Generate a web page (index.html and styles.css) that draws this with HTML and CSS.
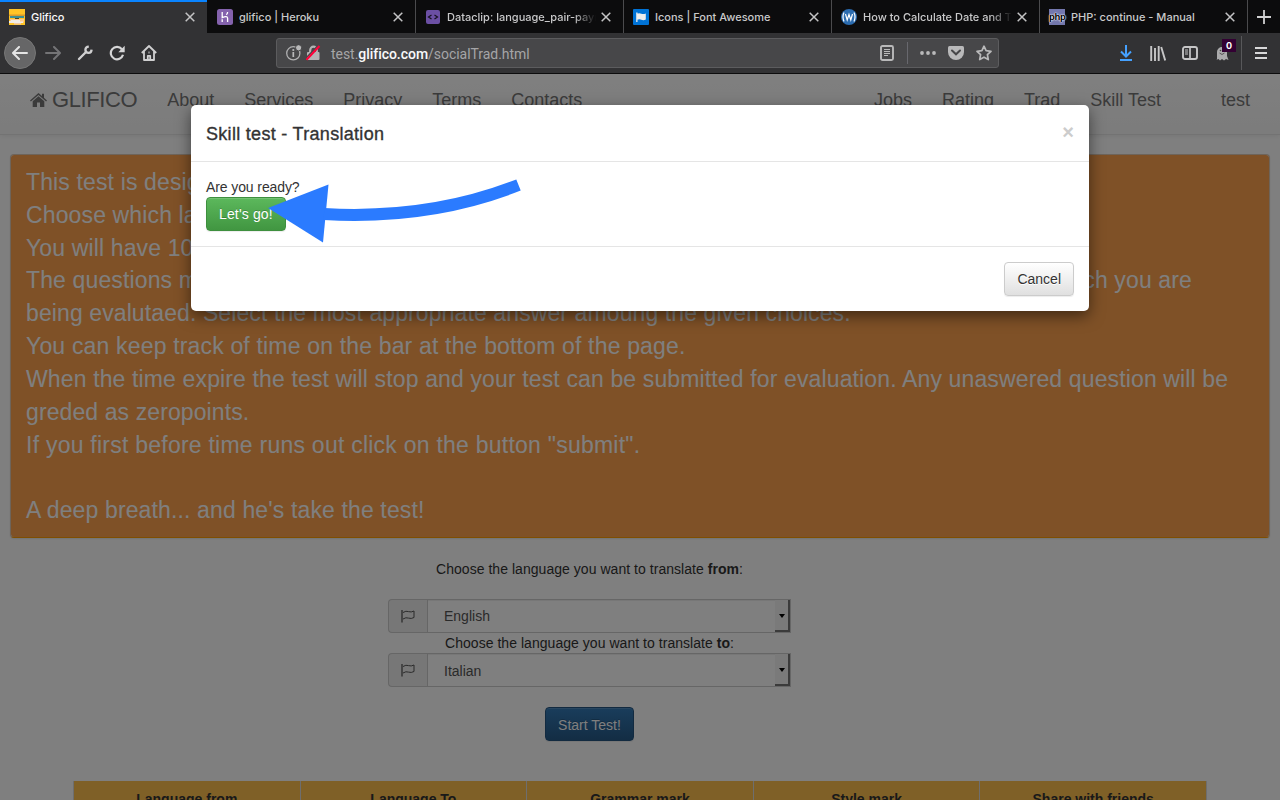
FILE: index.html
```html
<!DOCTYPE html>
<html lang="en">
<head>
<meta charset="utf-8">
<title>Glifico</title>
<link rel="stylesheet" href="styles.css">
</head>
<body>
<div class="window">
  <div class="tabs">
    <div class="tab active">
      <svg class="fav" viewBox="0 0 16 16"><path fill="#ffc425" d="M0 0h16v16H0z"/><path fill="#d99a2a" d="M0 5.500h16V7H0z"/><path fill="#3c8f91" d="M1 7h14v2H1z"/><path fill="#222" d="M6 9h4v.8H6z"/><path fill="#ffc98a" d="M1 10h14v3.500H1z"/><path fill="#f2ece4" d="M2 11h9v1.500h3V14H0v-2h2z"/><path fill="#ffc425" d="M0 14h16v2H0z"/><path fill="#f3c9a0" d="M5 14h7v1.500H5z"/></svg>
      <span class="tab-title">Glifico</span>
      <svg class="close" viewBox="0 0 10 10"><path d="M.7.7l8.6 8.6M9.3.7L.7 9.3"/></svg>
    </div>
    <div class="tab second">
      <svg class="fav" viewBox="0 0 16 16"><rect width="16" height="16" rx="2.500" fill="#8462ad"/><path d="M5.200 3v5.600q5-2 5.400.400V13M10.600 3q0 1.700-1.300 2.700M5.200 10.300v2.700" fill="none" stroke="#fff" stroke-width="1.300"/></svg>
      <span class="tab-title">glifico | Heroku</span>
      <svg class="close" viewBox="0 0 10 10"><path d="M.7.7l8.6 8.6M9.3.7L.7 9.3"/></svg>
    </div>
    <div class="tab">
      <svg class="fav" viewBox="0 0 16 16"><rect x="1" y="1" width="14" height="14" rx="2" fill="#6b4fa3"/><path d="M6.500 6L3.500 8l3 2M9.500 6l3 2-3 2" fill="none" stroke="#15101f" stroke-width="1.200"/></svg>
      <span class="tab-title fade">Dataclip: language_pair-payment</span>
      <svg class="close" viewBox="0 0 10 10"><path d="M.7.7l8.6 8.6M9.3.7L.7 9.3"/></svg>
    </div>
    <div class="tab">
      <svg class="fav" viewBox="0 0 16 16"><rect width="16" height="16" rx="1" fill="#0073d6"/><path fill="#eee" d="M3.200 3.500h1.300v9.500H3.200zM4 4.700q2.200-1 4.300 0 2 .800 4.500-.200v6q-2.300 1.200-4.500.200-2.100-.800-4.300.300z"/></svg>
      <span class="tab-title">Icons | Font Awesome</span>
      <svg class="close" viewBox="0 0 10 10"><path d="M.7.7l8.6 8.6M9.3.7L.7 9.3"/></svg>
    </div>
    <div class="tab">
      <svg class="fav" viewBox="0 0 16 16"><circle cx="8" cy="8" r="8" fill="#2b6cb0"/><path d="M3 3.500q-2 4.500 0 9M13 3.500q2 4.500 0 9M4.500 5l1.700 6L8 5.500 9.800 11l1.700-6" fill="none" stroke="#fff" stroke-width="1.200"/></svg>
      <span class="tab-title fade">How to Calculate Date and Time</span>
      <svg class="close" viewBox="0 0 10 10"><path d="M.7.7l8.6 8.6M9.3.7L.7 9.3"/></svg>
    </div>
    <div class="tab">
      <span class="fav php">php</span>
      <span class="tab-title">PHP: continue - Manual</span>
      <svg class="close" viewBox="0 0 10 10"><path d="M.7.7l8.6 8.6M9.3.7L.7 9.3"/></svg>
    </div>
    <div class="newtab"><svg width="14" height="14" viewBox="0 0 14 14"><path d="M7 0v14M0 7h14" stroke="#d0d0d1" stroke-width="1.800"/></svg></div>
  </div>

  <div class="toolbar">
    <div class="tools">
      <span class="back"><svg width="16" height="14" viewBox="0 0 16 14" fill="none" stroke="#e5e5e5" stroke-width="2" stroke-linecap="round" stroke-linejoin="round"><path d="M7 1L1 7l6 6M1.500 7H15"/></svg></span>
      <svg class="fwd" width="16" height="14" viewBox="0 0 16 14" fill="none" stroke="#747476" stroke-width="2" stroke-linecap="round" stroke-linejoin="round"><path d="M9 1l6 6-6 6M14.500 7H1"/></svg>
      <svg class="wrench" width="16" height="16" viewBox="0 0 16 16"><path d="M2 14L9 7" stroke="#cfcfd0" stroke-width="2.400" stroke-linecap="round"/><path d="M11.800 1.600Q8.500 1.700 8.400 4.800q.2 3 3.200 3.100 2.800-.1 3-3.300" fill="none" stroke="#cfcfd0" stroke-width="2.300"/></svg>
      <svg class="reload" width="16" height="16" viewBox="0 0 16 16"><path d="M12.900 4.300A6.200 6.200 0 1 0 14 9.800" fill="none" stroke="#d6d6d7" stroke-width="2.200"/><path d="M15.700.8v6.400H9.300z" fill="#d6d6d7"/></svg>
      <svg class="home" width="16" height="16" viewBox="0 0 16 16" fill="none" stroke="#d0d0d1" stroke-width="1.800" stroke-linejoin="round"><path d="M.8 8L8 1l7.200 7M3 6.500V15h10V6.500"/><path d="M6.800 15v-4.200h2.400V15M7.500 7.500h1"/></svg>
    </div>
    <div class="urlbar">
      <svg class="info" width="16" height="16" viewBox="0 0 16 16"><circle cx="7.300" cy="8.300" r="6.600" fill="none" stroke="#b0b0b1" stroke-width="1.300"/><circle cx="7.300" cy="5" r="1.100" fill="#b9b9ba"/><path d="M7.300 7v5" stroke="#b9b9ba" stroke-width="1.700"/><circle cx="12.600" cy="2.800" r="3.100" fill="#b9b9ba" stroke="#474749"/></svg>
      <svg class="lock" width="16" height="16" viewBox="0 0 16 16"><path d="M4.200 8V5a3.300 3.300 0 0 1 6.600 0v3" fill="none" stroke="#b4b4b5" stroke-width="2.200"/><rect x="1" y="7" width="12.500" height="8" rx="1" fill="#b4b4b5"/><path d="M12 .5L0 13" stroke="#474749" stroke-width="1.400"/><path d="M13.500 1L.5 14.700" stroke="#ff0039" stroke-width="2"/></svg>
      <span class="address">test.<b>glifico.com</b>/socialTrad.html</span>
      <svg class="reader" width="14" height="16" viewBox="0 0 14 16" fill="none" stroke="#b9b9ba"><rect x="1" y="1" width="12" height="14" rx="1.500" stroke-width="1.900"/><path d="M4 4.500h6M4 6.500h6M4 8.500h6M4 10.500h4"/></svg>
      <i class="sep"></i>
      <svg class="dots" width="16" height="4" viewBox="0 0 16 4" fill="#b9b9ba"><circle cx="2" cy="2" r="1.900"/><circle cx="8" cy="2" r="1.900"/><circle cx="14" cy="2" r="1.900"/></svg>
      <svg class="pocket" width="16" height="14" viewBox="0 0 16 14"><path d="M1.500 0h13Q16 0 16 1.500V6a8 8 0 0 1-16 0V1.500Q0 0 1.500 0z" fill="#b9b9ba"/><path d="M4 4.500l4 3.800 4-3.800" fill="none" stroke="#474749" stroke-width="2" stroke-linecap="round"/></svg>
      <svg class="star" width="16" height="16" viewBox="0 0 16 16"><path d="M8 1.200l2.100 4.500 4.900.6-3.600 3.400.9 4.900L8 12.200l-4.300 2.400.9-4.900L1 6.300l4.900-.6z" fill="none" stroke="#b9b9ba" stroke-width="1.700" stroke-linejoin="round"/></svg>
    </div>
    <div class="right-tools">
      <svg class="download" width="14" height="16" viewBox="0 0 14 16" fill="none" stroke="#45a1ff" stroke-width="2"><path d="M7 0v11M2 6.500L7 11.500l5-5M1 15h12"/></svg>
      <svg class="library" width="16" height="15" viewBox="0 0 16 15" stroke="#c6c6c7" stroke-width="1.900"><path d="M1.200 0v15M5 2v13M8.700 0v15M11.200 1l4 13.500"/></svg>
      <svg class="sidebar" width="16" height="14" viewBox="0 0 16 14" fill="none" stroke="#c6c6c7"><rect x="1" y="1" width="14" height="12" rx="2" stroke-width="1.900"/><path d="M8 1v12" stroke-width="1.700"/><path d="M3 4h3M3 6h3M3 8h3"/></svg>
      <span class="ghost"><svg width="14" height="16" viewBox="0 0 14 16"><path d="M2 15V7a5 5 0 0 1 10 0v4l1.500 4-2.500-1-2 1.500L7 14l-2 1.500-1.500-1.500L1 15z" fill="#aaaaab"/><path d="M4.500 8q2.500 3 5 0" fill="none" stroke="#555"/><circle cx="5.500" cy="5.500" r=".8" fill="#444"/></svg><span class="count">0</span></span>
      <i class="sep2"></i>
      <svg class="menu" width="12" height="12" viewBox="0 0 12 12" stroke="#d8d8d9" stroke-width="1.900"><path d="M0 1h12M0 6h12M0 11h12"/></svg>
    </div>
  </div>

  <div class="page">
    <nav class="navbar">
      <div class="brand"><svg width="17" height="14" viewBox="0 0 17 14"><path fill="#777" d="M8.500 0l3.500 3V.8h2v4L17 7.600l-.9 1L8.500 2 .9 8.600 0 7.600zM8.500 3.200l5.800 5V14H10V9.500H7V14H2.700V8.200z"/></svg><span>GLIFICO</span></div>
      <a>About</a><a>Services</a><a>Privacy</a><a>Terms</a><a>Contacts</a>
      <div class="nav-right"><a>Jobs</a><a>Rating</a><a>Trad</a><a>Skill Test</a><a class="user">test</a></div>
    </nav>

    <div class="panel">
      <p>This test is designed</p>
      <p>Choose which language</p>
      <p>You will have 10</p>
      <p class="split"><span>The questions m</span><span>ch you are</span></p>
      <p class="tight">being evalutaed. Select the most appropriate answer amoung the given choices.</p>
      <p class="wide">You can keep track of time on the bar at the bottom of the page.</p>
      <p>When the time expire the test will stop and your test can be submitted for evaluation. Any unaswered question will be</p>
      <p class="tight">greded as zeropoints.</p>
      <p class="wider">If you first before time runs out click on the button "submit".</p>
      <p>&nbsp;</p>
      <p>A deep breath... and he's take the test!</p>
    </div>

    <div class="form">
      <div class="label first">Choose the language you want to translate <b>from</b>:</div>
      <div class="group">
        <span class="addon"><svg width="14" height="13" viewBox="0 0 14 13" fill="none" stroke="#555"><path d="M1 0v12.500" stroke-width="1.300"/><path d="M2 2.500q3-2 5.500-.9 2.700 1 5.500-.6v6.500q-2.800 1.600-5.500.6Q5 7 2 9" /></svg></span>
        <span class="select">English<i class="drop"></i></span>
      </div>
      <div class="label">Choose the language you want to translate <b>to</b>:</div>
      <div class="group">
        <span class="addon"><svg width="14" height="13" viewBox="0 0 14 13" fill="none" stroke="#555"><path d="M1 0v12.500" stroke-width="1.300"/><path d="M2 2.500q3-2 5.500-.9 2.700 1 5.500-.6v6.500q-2.800 1.600-5.500.6Q5 7 2 9" /></svg></span>
        <span class="select low">Italian<i class="drop"></i></span>
      </div>
      <span class="btn primary">Start Test!</span>
    </div>

    <div class="scores"><span>Language from</span><span>Language To</span><span>Grammar mark</span><span>Style mark</span><span>Share with friends</span></div>

    <div class="backdrop">
      <div class="modal">
        <div class="modal-header"><h4>Skill test - Translation</h4><span class="dismiss">×</span></div>
        <div class="modal-body"><div class="ready">Are you ready?</div><span class="btn success">Let's go!</span></div>
        <div class="modal-footer"><span class="btn default">Cancel</span></div>
      </div>
    </div>
  </div>

  <svg class="arrow" width="256" height="62" viewBox="266 182 256 62"><path d="M268 208l60.500-23.500L323 242.500z" fill="#2b7bff"/><path d="M324 214Q430 220 518.500 185" fill="none" stroke="#2b7bff" stroke-width="12"/></svg>
</div>
</body>
</html>
```
FILE: styles.css
```css
* { box-sizing: border-box; }
body { margin: 0; font: 14px/20px "Liberation Sans", Arial, sans-serif; color: #333; background: #fff; }
svg { display: block; flex: none; }
.window { position: relative; width: 1280px; height: 800px; overflow: hidden; display: flex; flex-direction: column; }

/* browser tabs */
.tabs { display: flex; height: 33px; background: #0c0c0d; flex: none; }
.tab { width: 208px; flex: none; display: flex; align-items: center; padding: 1px 12px 0 9px; border-right: 1px solid #4b4b4d; font: 500 11px/16px Inter, sans-serif; color: #c9c9ca; }
.tab.second { width: 209px; padding-left: 10px; }
.tab.active { width: 207px; padding-top: 0; padding-bottom: 1px; background: #323234; border-top: 2px solid #0a84ff; border-right: 0; color: #f9f9fa; }
.tab.active .tab-title { letter-spacing: -.05px; }
.fav { width: 16px; height: 16px; flex: none; margin-right: 6px; }
.php { background: #7377ad; color: #000; font: bold 9.5px/15px "Liberation Sans", sans-serif; text-align: center; text-shadow: 0 0 1px #fff, 0 0 1px #fff, 0 0 2px #fff; letter-spacing: -.3px; }
.tab-title { flex: 1; white-space: nowrap; overflow: hidden; }
.fade { -webkit-mask-image: linear-gradient(90deg, #000 85%, transparent 100%); mask-image: linear-gradient(90deg, #000 85%, transparent 100%); }
.close { width: 10px; height: 10px; margin-left: 5px; stroke: #c4c4c5; stroke-width: 1.5; }
.newtab { flex: 1; display: flex; align-items: center; justify-content: center; }

/* browser toolbar */
.toolbar { height: 41px; flex: none; display: flex; align-items: center; background: #323234; border-bottom: 1px solid #0c0c0d; }
.tools { display: flex; align-items: center; width: 276px; padding-left: 4px; }
.back { width: 32px; height: 32px; border-radius: 50%; background: #666667; border: 1px solid #777; display: flex; align-items: center; justify-content: center; }
.fwd { margin-left: 9px; }
.wrench, .reload, .home { margin-left: 16px; }
.urlbar { width: 723px; height: 30px; display: flex; align-items: center; background: #474749; border: 1px solid #5c5c5e; border-radius: 3px; padding: 0 6px 0 9px; }
.lock { margin-left: 4px; }
.address { flex: 1; margin-left: 9px; padding-top: 1px; font: 14px/20px Roboto, sans-serif; color: #a5a5a7; letter-spacing: -.04px; }
.address b { font-weight: 500; color: #f9f9fa; }
.sep { width: 1px; height: 22px; background: #68686e; margin: 0 12px 0 13px; }
.pocket, .star { margin-left: 12px; }
.right-tools { flex: 1; display: flex; align-items: center; padding-left: 120px; }
.library { margin-left: 17px; }
.sidebar { margin-left: 16px; }
.ghost { position: relative; margin-left: 17px; }
.count { position: absolute; left: 7px; top: -6px; width: 14px; height: 13px; background: #330033; color: #fff; font: bold 9px/13px Inter, sans-serif; text-align: center; }
.sep2 { width: 1px; height: 34px; background: #58585a; margin: 0 13px 0 12px; }

/* site */
.page { position: relative; flex: 1; min-height: 0; overflow: hidden; background: #fff; }
.navbar { height: 61px; display: flex; align-items: center; padding: 0 15px 8px; background: linear-gradient(#fff, #f8f8f8); border-bottom: 1px solid #e7e7e7; box-shadow: 0 1px 5px rgba(0,0,0,.075); font-size: 18px; color: #777; }
.navbar a { padding: 0 15px; }
.brand { display: flex; align-items: center; padding: 0 15px; font-size: 22px; }
.brand span { margin-left: 5px; letter-spacing: -.4px; }
.nav-right { display: flex; margin-left: auto; }
.navbar .user { margin-left: 30px; }
.panel { margin: 19px 10px 0; height: 384px; padding: 11px 15px; background: #ffa24e; background-clip: padding-box; border: 1px solid #ddc8b4; border-bottom-color: #ff9c00; border-radius: 4px; color: #fff; font-size: 23px; line-height: 32.82px; letter-spacing: .135px; box-shadow: 0 1px 2px rgba(0,0,0,.1); }
.panel p { margin: 0; white-space: nowrap; }
.panel .tight { letter-spacing: .1px; }
.panel .wide { letter-spacing: .17px; }
.panel .wider { letter-spacing: .24px; }
.split { display: flex; justify-content: space-between; width: 1166px; }
.form { width: 403px; margin: 21px 0 0 388px; display: flex; flex-direction: column; align-items: center; }
.label { letter-spacing: .04px; }
.first { margin-bottom: 20px; }
.group { display: flex; width: 403px; height: 34px; }
.addon { width: 39px; display: flex; align-items: center; justify-content: center; background: #eee; border: 1px solid #ccc; border-right: 0; border-radius: 4px 0 0 4px; }
.select { flex: 1; display: flex; justify-content: space-between; border: 1px solid #ccc; padding-left: 16px; line-height: 33px; color: #555; box-shadow: inset 0 1px 1px rgba(0,0,0,.075); }
.low { line-height: 35px; }
.drop { width: 15px; background: #f4f4f4; border-right: 2px solid #777; border-bottom: 2px solid #777; display: flex; align-items: center; justify-content: center; }
.drop::after { content: ""; margin-top: 2px; border: 3.5px solid transparent; border-top: 4px solid #000; border-bottom: 0; }
.btn { display: inline-block; height: 34px; padding: 6px 12px; border: 1px solid; border-radius: 4px; text-shadow: 0 -1px 0 rgba(0,0,0,.2); box-shadow: inset 0 1px 0 rgba(255,255,255,.15), 0 1px 1px rgba(0,0,0,.075); color: #fff; white-space: nowrap; }
.primary { margin-top: 20px; padding-top: 7px; background: linear-gradient(#337ab7, #265a88); border-color: #245580; }
.success { background: linear-gradient(#5cb85c, #419641); border-color: #3e8f3e; letter-spacing: .15px; }
.default { background: linear-gradient(#fff, #e0e0e0); border-color: #ccc; color: #333; text-shadow: 0 1px 0 #fff; }
.scores { display: grid; grid-template-columns: repeat(5, 1fr); gap: 1px; width: 1134px; height: 60px; margin: 40px 0 0 73px; border: 1px solid #ddd; border-top: 0; background: #ddd; text-align: center; font-weight: bold; }
.scores span { background: #ffc04e; padding-top: 8px; }

/* dialog */
.backdrop { position: absolute; inset: 0; background: rgba(0,0,0,.5); }
.modal { width: 898px; height: 206px; margin: 31px 0 0 191px; background: #fff; border-radius: 5px; box-shadow: 0 5px 15px rgba(0,0,0,.5); }
.modal-header { height: 57px; padding: 0 15px; border-bottom: 1px solid #e5e5e5; display: flex; align-items: center; justify-content: space-between; }
.modal-header h4 { margin: 2px 0 0; font-size: 18px; font-weight: 500; letter-spacing: .3px; -webkit-text-stroke: .35px #333; }
.dismiss { font-size: 20px; font-weight: bold; color: #ccc; margin-top: -3px; }
.modal-body { height: 85px; padding: 15px 15px 0; border-bottom: 1px solid #e5e5e5; }
.ready { letter-spacing: -.1px; }
.modal-footer { padding: 15px; display: flex; justify-content: flex-end; }
.arrow { position: absolute; left: 266px; top: 182px; overflow: visible; }
```
